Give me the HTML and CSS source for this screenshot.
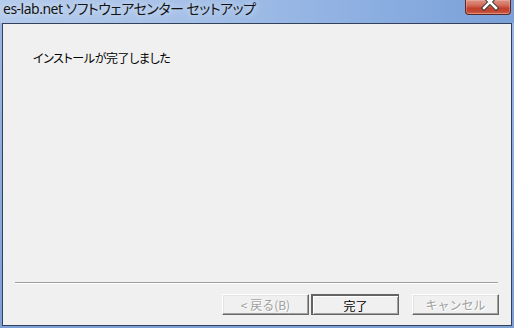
FILE: index.html
```html
<!DOCTYPE html>
<html lang="ja">
<head>
  <meta charset="UTF-8">
  <title>es-lab.net ソフトウェアセンター セットアップ</title>
  <link rel="stylesheet" href="styles.css">
</head>
<body>
  <div class="window">
    <div class="titlebar">
      <span class="title">es-lab.net ソフトウェアセンター セットアップ</span>
      <button class="close-btn" aria-label="閉じる">
        <svg width="46" height="15" viewBox="0 0 46 15">
          <path d="M19 -3 L31 9 M31 -3 L19 9" stroke="#3a3a3a" stroke-width="4.5" stroke-linecap="square" fill="none"/>
          <path d="M19 -3 L31 9 M31 -3 L19 9" stroke="#ffffff" stroke-width="2.5" stroke-linecap="square" fill="none"/>
        </svg>
      </button>
    </div>

    <div class="client">
      <p class="message">インストールが完了しました</p>

      <div class="separator"></div>

      <div class="btn-row">
        <button class="btn" disabled>&lt; 戻る(B)</button>
        <button class="btn btn-default">完了</button>
        <button class="btn btn-cancel" disabled>キャンセル</button>
      </div>
    </div>
  </div>
</body>
</html>
```

FILE: styles.css
```css
body {
  margin: 0;
  width: 514px;
  height: 328px;
  overflow: hidden;
  font-family: "Noto Sans CJK JP", "Noto Sans", sans-serif;
  font-size: 12px;
  color: #000;
}

.window {
  width: 514px;
  height: 328px;
  display: flex;
  flex-direction: column;
  background: linear-gradient(to bottom, #9bb8e2 0%, #86a8da 70%, #7ca0d6 100%);
}

.titlebar {
  height: 23px;
  display: flex;
  justify-content: space-between;
  align-items: flex-start;
  background: linear-gradient(to right, #b4cbec 0%, #a3bfe7 40%, #8aade0 75%, #7aa0d8 100%);
}

.title {
  padding-left: 3px;
  font-family: "Noto Sans", "Noto Sans CJK JP", sans-serif;
  font-size: 14px;
  line-height: 18px;
  letter-spacing: -0.5px;
  color: #141414;
  font-feature-settings: "palt";
  text-shadow: 0 0 6px rgba(225, 236, 250, 0.9), 0 0 12px rgba(225, 236, 250, 0.8);
}

.close-btn {
  width: 46px;
  height: 15px;
  margin-right: 3px;
  padding: 0;
  border: 1px solid #5b2a24;
  border-top: none;
  border-radius: 0 0 4px 4px;
  background: linear-gradient(to bottom, #dc9385 0%, #d4705f 35%, #c1402c 60%, #c24a34 85%, #d3735c 100%);
  box-shadow: inset 0 0 0 1px rgba(255, 200, 190, 0.35);
  overflow: hidden;
}

.close-btn svg {
  display: block;
  margin: -1px 0 0 -1px;
}

.client {
  flex: 1;
  margin: 0 2px 2px 2px;
  border: 1px solid #33425a;
  background: #f0f0f0;
  display: flex;
  flex-direction: column;
}

.message {
  margin: 26px 0 0 30px;
  line-height: 16px;
  flex: 1;
  font-feature-settings: "palt";
  letter-spacing: -0.4px;
}

.separator {
  margin: 0 13px 0 12px;
  border-top: 1px solid #a0a0a0;
  border-bottom: 1px solid #ffffff;
}

.btn-row {
  display: flex;
  justify-content: flex-end;
  gap: 2px;
  margin: 10px 12px 10px 0;
}

.btn {
  width: 87px;
  height: 21px;
  padding: 0;
  font-family: "Noto Sans CJK JP", sans-serif;
  font-size: 12px;
  line-height: 17px;
  background: #f0f0f0;
  color: #000;
  border: 1px solid;
  border-color: #ffffff #696969 #696969 #ffffff;
  box-shadow: inset -1px -1px 0 #a0a0a0, inset 1px 1px 0 #e3e3e3;
}

.btn:disabled {
  color: #a0a0a0;
  text-shadow: 1px 1px 0 #ffffff;
}

.btn-default {
  width: 88px;
  border: 2px solid #646464;
  border-right-width: 1px;
  border-bottom-width: 1px;
  box-shadow: inset 1px 1px 0 #ffffff, inset -1px -1px 0 #a0a0a0;
}

.btn-cancel {
  margin-left: 11px;
}
```
